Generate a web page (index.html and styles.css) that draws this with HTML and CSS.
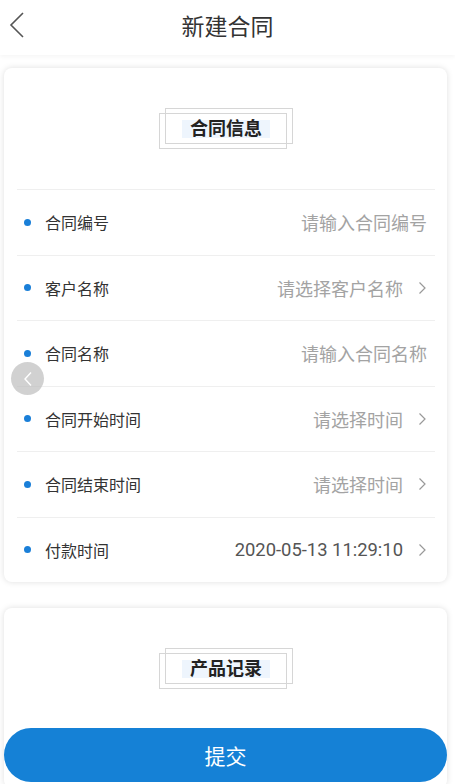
FILE: index.html
```html
<!DOCTYPE html>
<html lang="zh">
<head>
<meta charset="utf-8">
<title>新建合同</title>
<link rel="stylesheet" href="styles.css">
</head>
<body>
<header class="topbar">
  <span class="back">
    <svg width="16" height="26" viewBox="0 0 16 26"><path d="M14 1 L2 13 L14 25" fill="none" stroke="#555" stroke-width="1.6"/></svg>
  </span>
  <h1 class="title">新建合同</h1>
</header>
<main class="content">
  <section class="card">
    <div class="card-head">
      <div class="badge">
        <span class="frame frame-a"></span>
        <span class="frame frame-b"></span>
        <span class="badge-text">合同信息</span>
      </div>
    </div>
    <div class="row"><span class="dot"></span><span class="label">合同编号</span><span class="value ph">请输入合同编号</span></div>
    <div class="row"><span class="dot"></span><span class="label">客户名称</span><span class="value ph">请选择客户名称</span><svg class="arrow" width="9" height="14" viewBox="0 0 9 14"><path d="M1.5 1.5 L7 7 L1.5 12.5" fill="none" stroke="#999" stroke-width="1.2"/></svg></div>
    <div class="row"><span class="dot"></span><span class="label">合同名称</span><span class="value ph">请输入合同名称</span></div>
    <div class="row"><span class="dot"></span><span class="label">合同开始时间</span><span class="value ph">请选择时间</span><svg class="arrow" width="9" height="14" viewBox="0 0 9 14"><path d="M1.5 1.5 L7 7 L1.5 12.5" fill="none" stroke="#999" stroke-width="1.2"/></svg></div>
    <div class="row"><span class="dot"></span><span class="label">合同结束时间</span><span class="value ph">请选择时间</span><svg class="arrow" width="9" height="14" viewBox="0 0 9 14"><path d="M1.5 1.5 L7 7 L1.5 12.5" fill="none" stroke="#999" stroke-width="1.2"/></svg></div>
    <div class="row"><span class="dot"></span><span class="label">付款时间</span><span class="value filled">2020-05-13 11:29:10</span><svg class="arrow" width="9" height="14" viewBox="0 0 9 14"><path d="M1.5 1.5 L7 7 L1.5 12.5" fill="none" stroke="#999" stroke-width="1.2"/></svg></div>
  </section>
  <section class="card card-second">
    <div class="card-head">
      <div class="badge">
        <span class="frame frame-a"></span>
        <span class="frame frame-b"></span>
        <span class="badge-text">产品记录</span>
      </div>
    </div>
  </section>
</main>
<span class="float-back">
  <svg width="10" height="16" viewBox="0 0 10 16"><path d="M8 1.5 L2 8 L8 14.5" fill="none" stroke="#fff" stroke-width="1.4"/></svg>
</span>
<button class="submit">提交</button>
</body>
</html>
```
FILE: styles.css
```css
* { box-sizing: border-box; }
html, body { margin: 0; padding: 0; overflow: hidden; }
body {
  width: 455px;
  height: 784px;
  background: #fff;
  font-family: Roboto, "Noto Sans CJK SC", sans-serif;
  color: #333;
}
.topbar {
  height: 55px;
  display: flex;
  align-items: center;
  justify-content: center;
  position: relative;
  box-shadow: 0 2px 4px rgba(0,0,0,0.04);
  background: #fff;
}
.back {
  position: absolute;
  left: 9px;
  top: 12px;
  display: flex;
}
.title {
  margin: 0;
  font-size: 23px;
  font-weight: 400;
  color: #333;
  line-height: 1;
}
.content {
  padding: 13px 8px 0 4px;
  display: flex;
  flex-direction: column;
  gap: 26px;
}
.card {
  background: #fff;
  border-radius: 8px;
  box-shadow: 0 0 6px rgba(0,0,0,0.13);
  padding: 0 12px 0 13px;
}
.card-second { height: 180px; }
.card-head {
  height: 121px;
  display: flex;
  justify-content: center;
  padding-top: 40px;
}
.badge {
  position: relative;
  width: 134px;
  height: 41px;
  display: flex;
  align-items: center;
  justify-content: center;
}
.frame {
  position: absolute;
  border: 1px solid #d6d6d6;
  width: 128px;
  height: 36px;
}
.frame-a { top: 0; right: 0; }
.frame-b { bottom: 0; left: 0; }
.badge-text {
  position: relative;
  background: #eef5fd;
  font-size: 18px;
  font-weight: 700;
  line-height: 18px;
  padding: 0 8px;
  color: #222;
}
.row {
  height: 65.5px;
  border-top: 1px solid #efefef;
  display: flex;
  align-items: center;
  padding: 0 8px 0 7px;
}
.dot {
  width: 7px;
  height: 7px;
  border-radius: 50%;
  background: #1a7fd8;
  margin-right: 14px;
}
.label {
  font-size: 16px;
  color: #333;
  flex: 1;
}
.value {
  font-size: 18px;
}
.ph { color: #a3a3a3; }
.filled { color: #555; font-size: 18.4px; }
.arrow { margin-left: 15px; }
.float-back {
  position: absolute;
  left: 11px;
  top: 362px;
  width: 33px;
  height: 33px;
  border-radius: 50%;
  background: rgba(190,190,190,0.7);
  display: flex;
  align-items: center;
  justify-content: center;
}
.submit {
  position: fixed;
  left: 4px;
  bottom: 2px;
  width: 443px;
  height: 54px;
  border: none;
  border-radius: 27px;
  background: #1581d6;
  color: #fff;
  font-family: "Noto Sans CJK SC", sans-serif;
  font-size: 21px;
  padding: 0;
}
```
